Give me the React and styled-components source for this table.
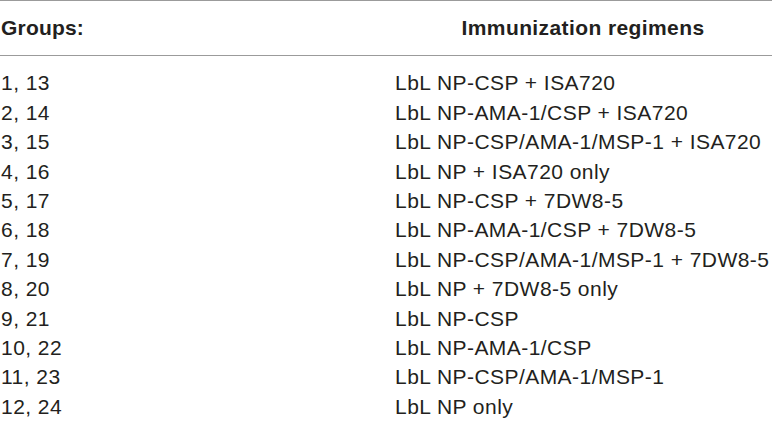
import React from 'react'
import styled, { createGlobalStyle } from 'styled-components'

const GlobalStyle = createGlobalStyle`
  html, body {
    margin: 0;
    padding: 0;
    background: #ffffff;
  }
  body {
    font-family: 'Liberation Sans', Arial, Helvetica, sans-serif;
    color: #231f20;
  }
`

const rows = [
  ['1, 13', 'LbL NP-CSP + ISA720'],
  ['2, 14', 'LbL NP-AMA-1/CSP + ISA720'],
  ['3, 15', 'LbL NP-CSP/AMA-1/MSP-1 + ISA720'],
  ['4, 16', 'LbL NP + ISA720 only'],
  ['5, 17', 'LbL NP-CSP + 7DW8-5'],
  ['6, 18', 'LbL NP-AMA-1/CSP + 7DW8-5'],
  ['7, 19', 'LbL NP-CSP/AMA-1/MSP-1 + 7DW8-5'],
  ['8, 20', 'LbL NP + 7DW8-5 only'],
  ['9, 21', 'LbL NP-CSP'],
  ['10, 22', 'LbL NP-AMA-1/CSP'],
  ['11, 23', 'LbL NP-CSP/AMA-1/MSP-1'],
  ['12, 24', 'LbL NP only']
]

const App = () => {
  return <>
    <GlobalStyle/>
    <Wrapper>
      {/* start header */}
      <HeadRow>
        <HeadCell>Groups:</HeadCell>
        <HeadCell center>Immunization regimens</HeadCell>
      </HeadRow>
      {/* end header */}

      {/* start body */}
      <Body>
        {
          rows.map(([group, regimen], idx) => {
            return (
              <Row key={idx}>
                <Cell>{group}</Cell>
                <Cell>{regimen}</Cell>
              </Row>
            )
          })
        }
      </Body>
      {/* end body */}
    </Wrapper>
  </>
}

const Wrapper = styled.section`
  width: 772px;
  height: 426px;
  overflow: hidden;
  border-top: 1px solid #9b9b9b;
  box-sizing: border-box;
`

const HeadRow = styled.div`
  display: grid;
  grid-template-columns: 394px 1fr;
  padding: 12px 0 12.5px;
  border-bottom: 1.5px solid #9b9b9b;
`

const HeadCell = styled.div`
  font-size: 21px;
  font-weight: 700;
  line-height: 29.4px;
  letter-spacing: ${props => props.center ? '0.4px' : '0.2px'};
  padding-left: ${props => props.center ? '0' : '1px'};
  text-align: ${props => props.center ? 'center' : 'left'};
`

const Body = styled.div`
  display: flex;
  flex-direction: column;
  padding-top: 12.5px;
`

const Row = styled.div`
  display: grid;
  grid-template-columns: 394px 1fr;
`

const Cell = styled.div`
  font-size: 21px;
  line-height: 29.4px;
  letter-spacing: 0.45px;
  padding-left: 1px;
  white-space: nowrap;
`

export default App
